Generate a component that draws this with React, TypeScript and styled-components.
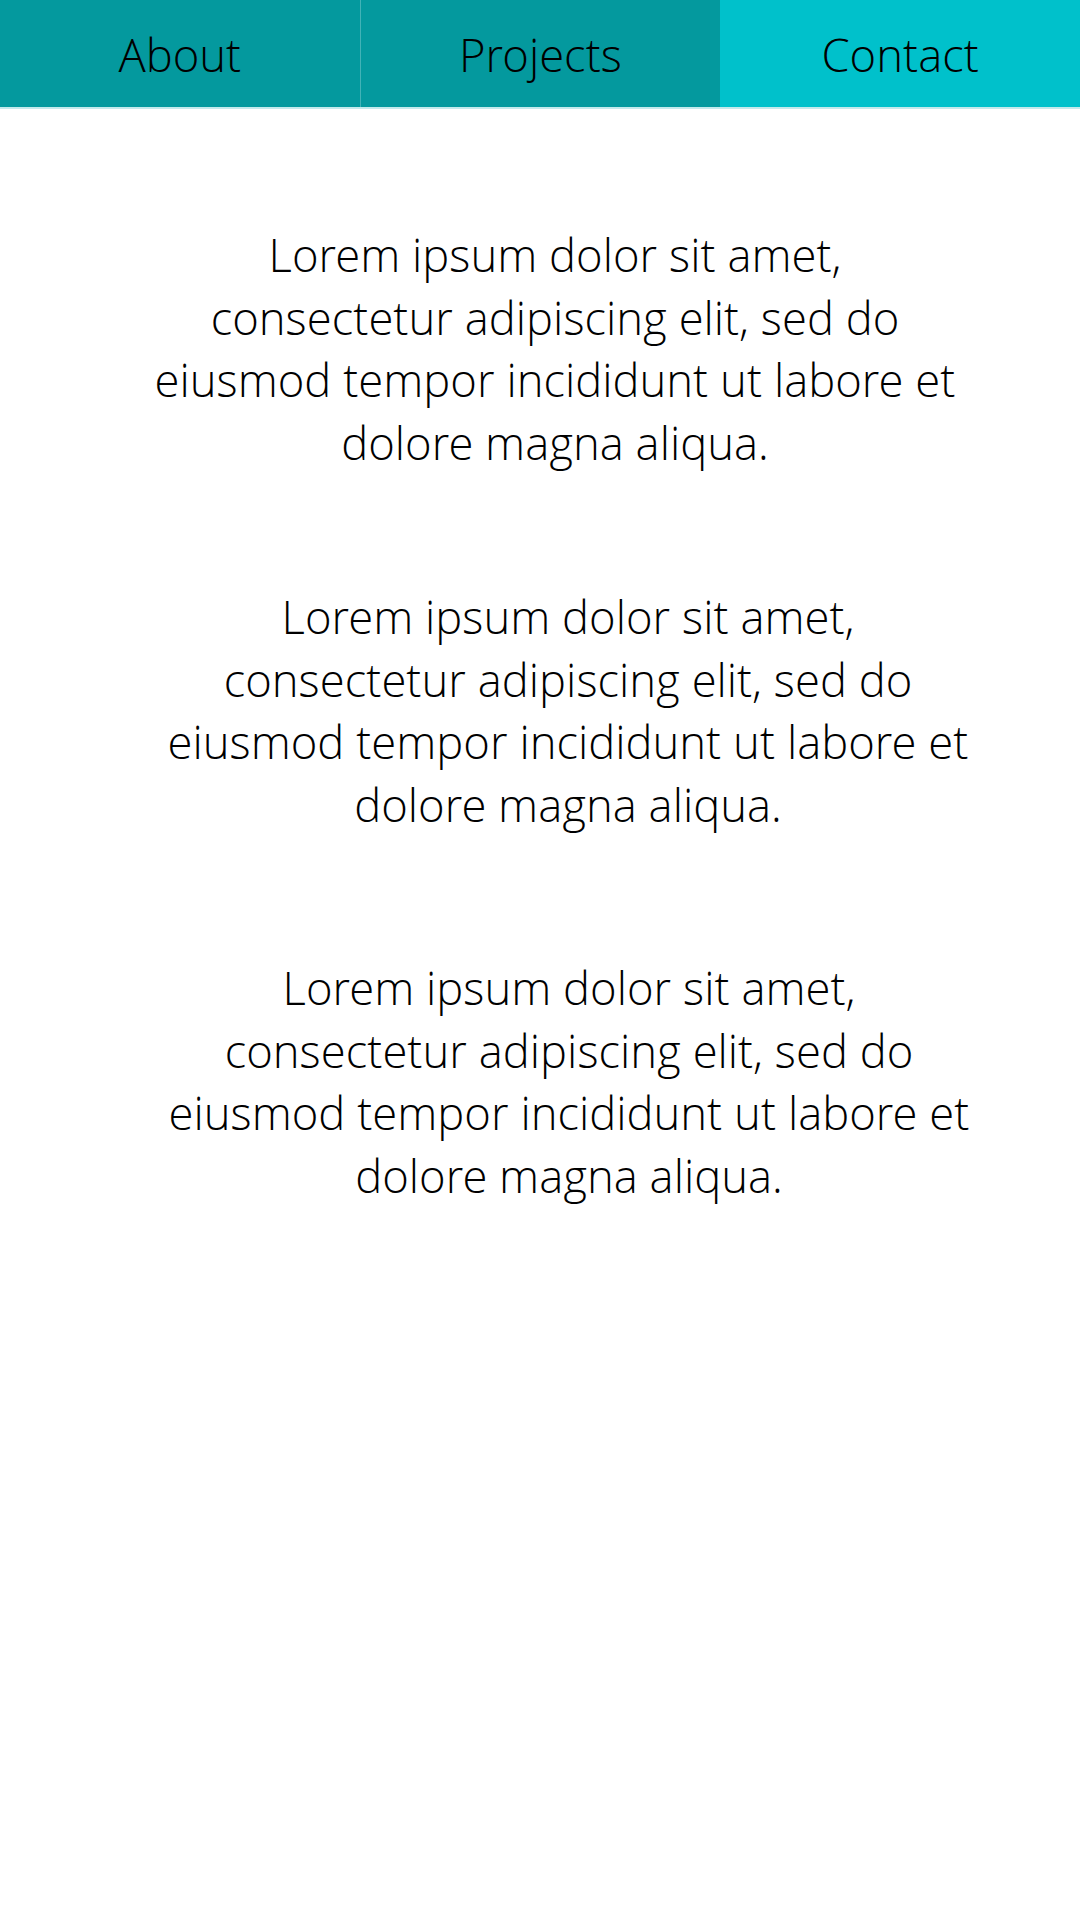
import React from "react";
import styled, { createGlobalStyle } from "styled-components";

const FONT = `"Open Sans Light", "Open Sans", "Noto Sans", sans-serif`;

const GlobalStyle = createGlobalStyle`
  html, body {
    margin: 0;
    padding: 0;
    background: #ffffff;
  }
  body {
    font-family: ${FONT};
    font-weight: 300;
    color: #000000;
  }
`;

const Nav = styled.nav`
  display: flex;
  width: 1080px;
  height: 107px;
  border-bottom: 2px solid #c4eaec;
`;

const NavItem = styled.a<{ $active?: boolean; $divider?: boolean }>`
  flex: 1 1 0;
  display: flex;
  align-items: center;
  justify-content: center;
  background: ${(p) => (p.$active ? "#00c1cb" : "#04999e")};
  border-right: ${(p) => (p.$divider ? "1px solid #42b3b7" : "none")};
  font-family: ${FONT};
  font-weight: 300;
  font-size: 45.4px;
  line-height: 62px;
  color: #000000;
  text-decoration: none;
`;

const Main = styled.main`
  display: flex;
  flex-direction: column;
  align-items: flex-start;
  padding-top: 114px;
`;

const Paragraph = styled.p<{ $offset: number; $gap: number }>`
  width: 814px;
  margin: ${(p) => p.$gap}px 0 0 ${(p) => p.$offset}px;
  font-family: ${FONT};
  font-weight: 300;
  font-size: 45.4px;
  line-height: 62.5px;
  text-align: center;
  color: #000000;
`;

const LOREM =
  "Lorem ipsum dolor sit amet, consectetur adipiscing elit, sed do eiusmod tempor incididunt ut labore et dolore magna aliqua.";

export default function App() {
  return (
    <>
      <GlobalStyle />
      <Nav>
        <NavItem href="#about" $divider>
          About
        </NavItem>
        <NavItem href="#projects">Projects</NavItem>
        <NavItem href="#contact" $active>
          Contact
        </NavItem>
      </Nav>
      <Main>
        <Paragraph $offset={148} $gap={0}>
          {LOREM}
        </Paragraph>
        <Paragraph $offset={161} $gap={112}>
          {LOREM}
        </Paragraph>
        <Paragraph $offset={162} $gap={121}>
          {LOREM}
        </Paragraph>
      </Main>
    </>
  );
}
